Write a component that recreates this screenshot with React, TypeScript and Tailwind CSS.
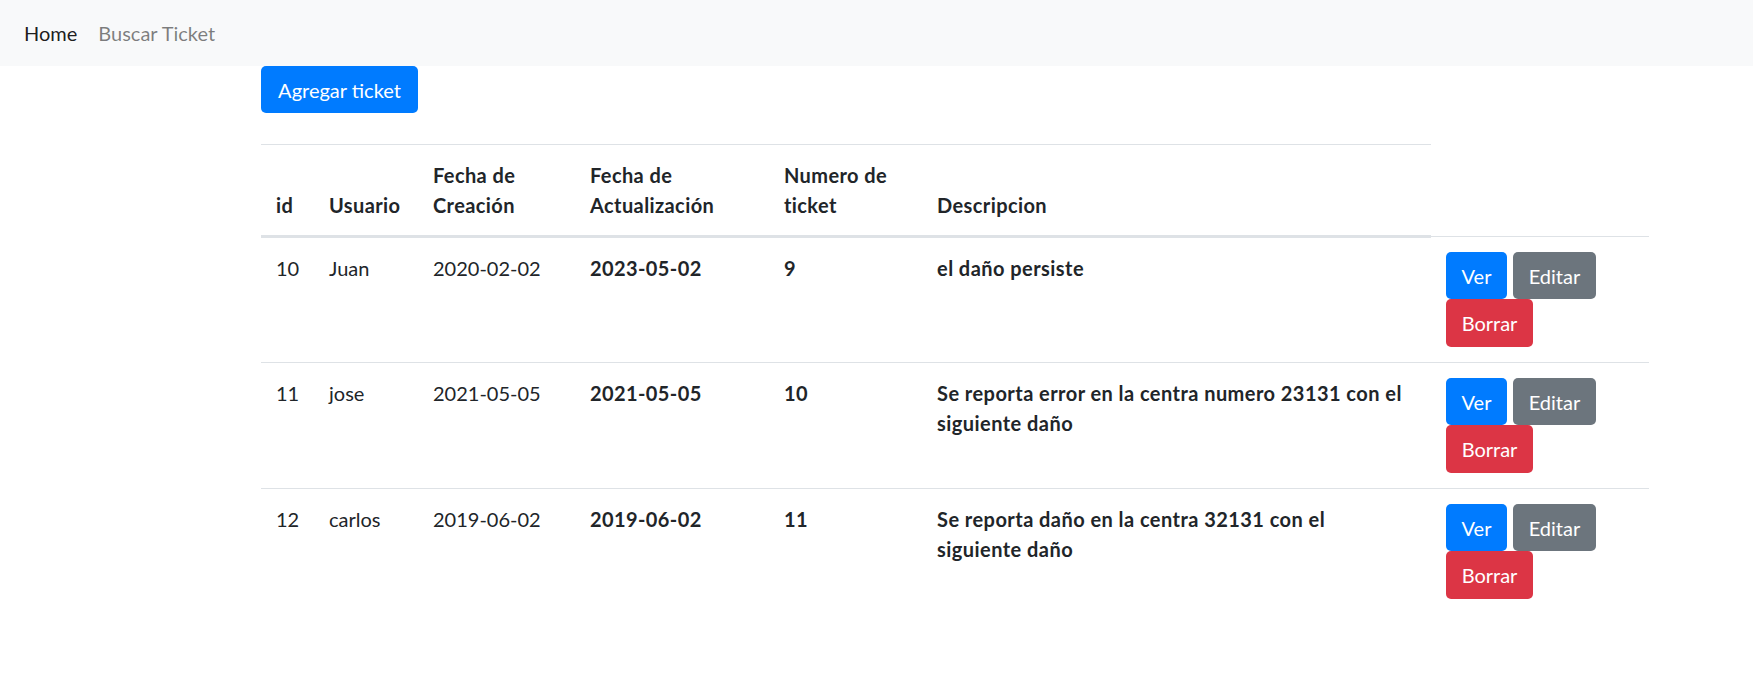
import * as React from "react";

interface Ticket {
  id: number;
  usuario: string;
  creacion: string;
  actualizacion: string;
  numero: number;
  descripcion: string;
}

const tickets: Ticket[] = [
  { id: 10, usuario: "Juan", creacion: "2020-02-02", actualizacion: "2023-05-02", numero: 9, descripcion: "el daño persiste" },
  { id: 11, usuario: "jose", creacion: "2021-05-05", actualizacion: "2021-05-05", numero: 10, descripcion: "Se reporta error en la centra numero 23131 con el siguiente daño" },
  { id: 12, usuario: "carlos", creacion: "2019-06-02", actualizacion: "2019-06-02", numero: 11, descripcion: "Se reporta daño en la centra 32131 con el siguiente daño" },
];

const btn = "inline-block h-[47px] px-[15px] rounded-[5px] text-white text-[20px] leading-[30px]";

const App: React.FC = () => {
  return (
    <div className="min-h-screen bg-white text-[#212529] text-[20px] leading-[30px] font-['Lato','Noto_Sans',sans-serif]">
      {/* navbar */}
      <nav className="h-[66px] bg-[#f8f9fa] flex items-center px-[24px] gap-[21px]">
        <a className="text-[rgba(0,0,0,0.9)]">Home</a>
        <a className="text-[rgba(0,0,0,0.5)]">Buscar Ticket</a>
      </nav>

      <main className="pl-[261px]">
        <button className={`${btn} bg-[#007bff] w-[157px]`}>Agregar ticket</button>

        <table className="mt-[31px] border-collapse table-fixed w-[1388px]">
          <colgroup>
            <col className="w-[53px]" />
            <col className="w-[104px]" />
            <col className="w-[157px]" />
            <col className="w-[194px]" />
            <col className="w-[153px]" />
            <col className="w-[509px]" />
            <col className="w-[218px]" />
          </colgroup>
          <thead>
            <tr className="align-bottom text-left">
              {["id", "Usuario", "Fecha de Creación", "Fecha de Actualización", "Numero de ticket", "Descripcion"].map((h) => (
                <th
                  key={h}
                  className="px-[15px] pt-[15px] pb-[15px] border-t border-t-[#dee2e6] border-b-[3px] border-b-[#dee2e6] font-bold tracking-[0.4px]"
                >
                  {h.startsWith("Fecha de ") ? (
                    <>Fecha de<br />{h.slice(9)}</>
                  ) : h === "Numero de ticket" ? (
                    <>Numero de<br />ticket</>
                  ) : (
                    h
                  )}
                </th>
              ))}
              <th />
            </tr>
          </thead>
          <tbody>
            {tickets.map((t) => (
              <tr key={t.id} className="align-top border-t border-[#dee2e6]">
                <td className="px-[15px] py-[15px]">{t.id}</td>
                <td className="px-[15px] py-[15px]">{t.usuario}</td>
                <td className="px-[15px] py-[15px]">{t.creacion}</td>
                <td className="px-[15px] py-[15px] font-bold tracking-[0.4px]">{t.actualizacion}</td>
                <td className="px-[15px] py-[15px] font-bold tracking-[0.4px]">{t.numero}</td>
                <td className="pl-[15px] pr-[23px] py-[15px] font-bold tracking-[0.45px]">{t.descripcion}</td>
                <td className="px-[15px] py-[15px]">
                  <div className="flex flex-wrap gap-x-[6px] w-[187px]">
                    <button className={`${btn} bg-[#007bff] w-[61px]`}>Ver</button>
                    <button className={`${btn} bg-[#6c757d] w-[83px]`}>Editar</button>
                    <button className={`${btn} bg-[#dc3545] w-[87px] h-[48px]`}>Borrar</button>
                  </div>
                </td>
              </tr>
            ))}
          </tbody>
        </table>
      </main>
    </div>
  );
};

export default App;
